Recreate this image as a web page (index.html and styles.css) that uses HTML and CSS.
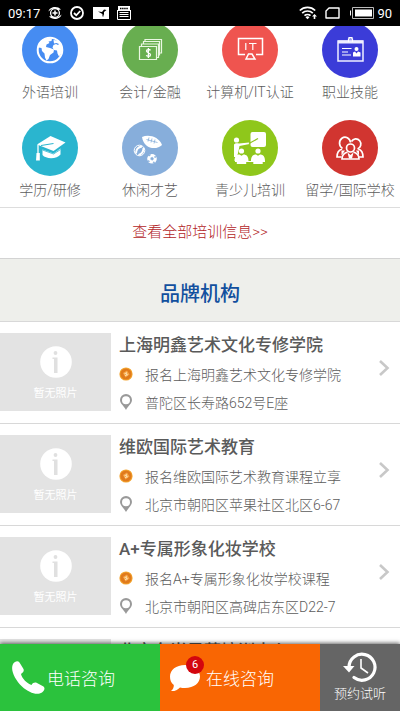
FILE: index.html
```html
<!DOCTYPE html>
<html lang="zh-CN">
<head>
<meta charset="utf-8">
<meta name="viewport" content="width=device-width, initial-scale=1">
<title>培训信息</title>
<link rel="stylesheet" href="styles.css">
</head>
<body>
<svg class="defs" aria-hidden="true">
  <symbol id="coupon" viewBox="0 0 14 14">
    <circle cx="7" cy="7" r="6.6" fill="#f3a42e"/>
    <circle cx="7" cy="7" r="5.6" fill="#e07a1c"/>
    <path d="M4 6l4-2.500 2.500 4-4 3z" fill="#f6a94a"/>
    <path d="M5.500 6.800 8 5.500M7 6l1.200 2.500M6 8.800 8.500 7.500" stroke="#fff0d5" stroke-width=".7" fill="none"/>
  </symbol>
  <symbol id="pin" viewBox="0 0 14 18">
    <path fill-rule="evenodd" d="M7 1a6 6 0 0 0-6 6c0 3.500 4 6 6 10 2-4 6-6.500 6-10a6 6 0 0 0-6-6zm0 2.200a4 4 0 1 1 0 8 4 4 0 0 1 0-8z" fill="#999"/>
  </symbol>
  <symbol id="info" viewBox="0 0 32 32">
    <circle cx="16" cy="16" r="15.800" fill="#fff"/>
    <circle cx="15.500" cy="7" r="1.900" fill="#e0e0e0"/>
    <path d="M12.500 11.500h5V27H14V13h-1.500z" fill="#e0e0e0"/>
  </symbol>
  <symbol id="arrow" viewBox="0 0 12 18">
    <path d="M2 2l7.500 7L2 16" fill="none" stroke="#c8c8c8" stroke-width="2.600"/>
  </symbol>
</svg>
<div class="app">
  <header class="status">
    <time>09:17</time>
    <svg class="s-sync" width="14" height="14" viewBox="0 0 14 14"><path d="M.5 5.500C1.500.5 9.500-.5 13 3.500L10 4C7 1.500 3.500 2.500.5 5.500zM13.500 8.500c-1 5-9 6-12.500 2L4 10c3 2.500 6.500 1.500 9.500-1.500z" fill="#fff"/><circle cx="7" cy="7" r="4.400" fill="none" stroke="#fff" stroke-width="1.300"/><path d="M4.500 7h5M7 4.500v5" stroke="#fff" stroke-width="1.500"/></svg>
    <svg class="s-check" width="14" height="14" viewBox="0 0 14 14"><circle cx="7" cy="7" r="6" fill="none" stroke="#fff" stroke-width="1.800"/><path d="M4 7l2.300 2.300L10.200 5" fill="none" stroke="#fff" stroke-width="1.800"/></svg>
    <svg class="s-photo" width="16" height="12" viewBox="0 0 16 12"><path fill="#fff" d="M0 0h16v12H0z"/><path d="M1.500 2.500 5 4.500l4 .5 2-2.500 2.500.5-2.500 2v3L8.500 6.500z" fill="#000"/><path d="M10 7v2.500" stroke="#000"/></svg>
    <svg class="s-news" width="14" height="14" viewBox="0 0 14 14"><path fill="#fff" d="M1 0h12v5H1z"/><path d="M3 2.500h8" stroke="#000" stroke-width="1.500" stroke-dasharray="1.500 .6"/><path d="M.5 4v9.500h13V4M2.500 6.500h9M2.500 8.500h9M2.500 10.500h9" fill="none" stroke="#fff"/></svg>
    <span class="spacer"></span>
    <svg class="s-wifi" width="19" height="14" viewBox="0 0 19 14"><g fill="none" stroke="#fff" stroke-width="1.700"><path d="M.8 4.500a11 11 0 0 1 15.400 0M3.200 7.200a7.500 7.500 0 0 1 10.600 0M5.500 9.700a4.300 4.300 0 0 1 6 0"/></g><path d="M6.500 11.200a3 3 0 0 1 4 0l-2 2z" fill="#fff"/><path d="M15.500 8 13 10.500h1.700V13h1.600v-2.500H18z" fill="#fff"/></svg>
    <svg class="s-sim" width="15" height="12" viewBox="0 0 15 12"><path d="M4 1h10v10H1V4z" fill="none" stroke="#fff" stroke-width="1.400" stroke-linejoin="round"/></svg>
    <svg class="s-batt" width="24" height="12" viewBox="0 0 24 12"><path d="M2.500.5h21v11h-21z" fill="none" stroke="#bbb"/><path d="M5 2.500h17v7H5zM0 3.500h1v5H0z" fill="#fff"/></svg>
    <span>90</span>
  </header>

  <main>
    <nav class="cats">
      <a href="#"><span class="disc blue"><svg viewBox="0 0 56 56"><circle cx="28" cy="28" r="12.300" fill="none" stroke="#fff" stroke-width="2"/><path d="M16.500 23C18 18.500 22 16 27 16l3 .8-.5 2.200-3 .5 1 1.500-3 1.500-.5 2.500 4 1 4 1.500-.5 3-3.500 2.500-1.500 4-2 1.500-1.500-3-.5-4-2.500-2.500-.5-3-3-.5z" fill="#fff"/><path d="M31.500 18l3.500.5c4 2.500 5.500 6 5 10.500-.5 2-1.500 4-3 5.500l-1.500-3-.5-3-3-.5-1.500-2.500 1-2.500 2.500-1 2 1 1-1-2.500-1-2.500.5z" fill="#fff"/></svg></span>外语培训</a>
      <a href="#"><span class="disc green"><svg viewBox="0 0 56 56"><g fill="none" stroke="#eaf7e2" stroke-width="1.200"><path d="M17.500 24.500h17v13h-17zM19.500 24v-2h17v13.500h-2M21.500 21.500v-2h16V33h-1.500M23 19.500V17.500h16.500V31H38"/></g><path d="M28.500 28.300c-.7-1-4-1.300-4 .7s4 1.500 4 3.700-3.500 2-4.200.6M26.400 26v10" fill="none" stroke="#fff" stroke-width="1.300"/></svg></span>会计/金融</a>
      <a href="#"><span class="disc coral"><svg viewBox="0 0 56 56"><path d="M23 32.500h-6.500V16.500h24v16H34M24 37l2.500-5h3.500l3 5z" fill="none" stroke="#fff" stroke-width="1.500"/><path d="M23.800 21v7M27 21.500h7.500M30.800 21.500V28" fill="none" stroke="#fff" stroke-width="1.200"/></svg></span>计算机/IT认证</a>
      <a href="#"><span class="disc indigo"><svg viewBox="0 0 56 56"><path d="M16 19h25v20H16z" fill="none" stroke="#eef" stroke-width="1.500"/><path d="M16 18.500h25v3H16z" fill="#eef"/><path d="M26.500 20v-3h4v3M27 17v-1.500h3V17" fill="none" stroke="#fff" stroke-width="1.200"/><path d="M20 26.500h9.500M20 30h6M20 33h9" stroke="#fff" stroke-width="1.200"/><circle cx="34.500" cy="27" r="2" fill="#fff"/><path d="M31 34.500v-4l2-1 1.500 2 1.500-2 2.500 1v4z" fill="#fff"/></svg></span>职业技能</a>
      <a href="#"><span class="disc cyan"><svg viewBox="0 0 56 56"><path d="M15 24.500 28.500 16 43.500 22.500 31.500 31z" fill="#fff"/><path d="M20.500 29.500l11 4 7-5v6c-3 4.500-14.500 5-18 .5z" fill="#fff"/><path d="M31.500 23.500 19 25.500" stroke="#2ab5cf" stroke-width="1"/><path d="M20.500 30l11 4 7-4.500" fill="none" stroke="#2ab5cf" stroke-width=".8"/><path d="M16 25v9" stroke="#fff" stroke-width="1.300"/><path d="M14.500 33h3.300v7.500h-3.800z" fill="#fff"/></svg></span>学历/研修</a>
      <a href="#"><span class="disc sky"><svg viewBox="0 0 56 56"><path d="M20 17c7-3 17 0 20 8-5 5-18 5-20-8z" fill="#fff"/><path d="M24.500 19.500l11 3M27 17.500l-1 4M30 18.500l-1 4M33 19.500l-1 4" stroke="#87aedb" stroke-width=".8"/><circle cx="17.500" cy="30.500" r="5.300" fill="none" stroke="#fff" stroke-width="1"/><path d="M14 33.500c0-4 2.500-6.500 6-7M16.500 35c3.500-1 5-3.500 5-7" fill="none" stroke="#fff" stroke-width="2"/><circle cx="30" cy="38.800" r="4.800" fill="#fff"/><path d="M28.800 37.800l1.800-.6 1 1.600-1 1.400-1.800-.6zM26 35.500l1.800.5.7-1.500zM34.200 36.500l-1.700 0 .5 1.500zM33 42.500l-1.500-.8-.5 1.500zM25.500 41l1.500-.5.5 1.500z" fill="#87aedb" stroke="#87aedb" stroke-width=".5"/></svg></span>休闲才艺</a>
      <a href="#"><span class="disc lime"><svg viewBox="0 0 56 56"><rect x="28.500" y="12" width="15.500" height="15" rx="2" fill="#fff"/><circle cx="14.500" cy="20" r="2.600" fill="#fff"/><path d="M12 24.500c1-1.500 3-1.500 5-1l10-1 .5 1.500-10 2-1 5-1.500 6h-3z" fill="#fff"/><path d="M27 23.500l9-5" stroke="#8ec31f" stroke-width="1.200"/><circle cx="19.500" cy="31" r="2.600" fill="#fff"/><circle cx="36" cy="31" r="2.600" fill="#fff"/><path d="M12.500 41c0-4.500 2-6.500 5-6.500l2 1.200 2-1.200c3 0 5 2 5 6.500h-2.300v3h-9.400v-3zM29 41c0-4.500 2-6.500 5-6.500l2 1.200 2-1.200c3 0 5 2 5 6.500h-2.300v3h-9.400v-3z" fill="#fff"/><path d="M13 41.500h30" stroke="#fff"/></svg></span>青少儿培训</a>
      <a href="#"><span class="disc red"><svg viewBox="0 0 56 56"><g fill="none" stroke="#fff" stroke-width="1.700"><path d="M20.500 28.500a5.500 6 0 1 1 8-6M29.500 21.500a5 5.200 0 1 1 6 7.500M20 29c-3.500 1-5 4-5 8h4.500M36.500 29c3 1 4.500 4 4.500 8h-4.500"/><circle cx="28.500" cy="28" r="4"/><path d="M25.500 32c-3.500 1-5.500 3.500-5.500 7h17c0-3.500-2-6-5.500-7"/></g><path d="M25.500 32.500l3 2.500 3-2.500-1.500 6h-3zM19.500 30.500l3.500 0-3.500 5zM37 30.500l-3 0 3 5z" fill="#fff"/></svg></span>留学/国际学校</a>
    </nav>
    <a class="all" href="#">查看全部培训信息&gt;&gt;</a>
    <h2>品牌机构</h2>
    <ul class="list">
      <li><a href="#">
        <span class="thumb"><svg viewBox="0 0 32 32"><use href="#info"/></svg>暂无照片</span>
        <span class="text"><strong>上海明鑫艺术文化专修学院</strong>
          <span class="row"><svg class="coupon"><use href="#coupon"/></svg>报名上海明鑫艺术文化专修学院</span>
          <span class="row"><svg class="pin"><use href="#pin"/></svg>普陀区长寿路652号E座</span></span>
        <svg class="arrow"><use href="#arrow"/></svg></a></li>
      <li><a href="#">
        <span class="thumb"><svg viewBox="0 0 32 32"><use href="#info"/></svg>暂无照片</span>
        <span class="text"><strong>维欧国际艺术教育</strong>
          <span class="row"><svg class="coupon"><use href="#coupon"/></svg>报名维欧国际艺术教育课程立享</span>
          <span class="row"><svg class="pin"><use href="#pin"/></svg>北京市朝阳区苹果社区北区6-67</span></span>
        <svg class="arrow"><use href="#arrow"/></svg></a></li>
      <li><a href="#">
        <span class="thumb"><svg viewBox="0 0 32 32"><use href="#info"/></svg>暂无照片</span>
        <span class="text"><strong>A+专属形象化妆学校</strong>
          <span class="row"><svg class="coupon"><use href="#coupon"/></svg>报名A+专属形象化妆学校课程</span>
          <span class="row"><svg class="pin"><use href="#pin"/></svg>北京市朝阳区高碑店东区D22-7</span></span>
        <svg class="arrow"><use href="#arrow"/></svg></a></li>
      <li><a href="#">
        <span class="thumb"></span>
        <span class="text"><strong>北京东尚风范培训中心</strong></span></a></li>
    </ul>
  </main>

  <footer class="bar">
    <a class="call" href="#"><svg width="34" height="34" viewBox="0 0 34 34"><path d="M2 3C4 0 7-.5 8.500 1.500l4 6.500c.8 2-.3 3.500-2.500 5 1 4.500 6 9.500 10.500 11 1.500-2.500 3.500-3 5.500-2l6.500 3.500c1.800 1.500 1 4-1.500 6-5 3-13 .5-20-6S-1 9 2 3z" fill="#fff"/></svg>电话咨询</a>
    <a class="chat" href="#"><span class="bubble"><svg width="34" height="30" viewBox="0 0 34 30"><path d="M17 2c9 0 15 5 15 11.500S26 25 17 25c-2 0-3.500-.2-5-.6C9.500 27 6 28.500 3 28c2-1.500 3-4 2.800-6C3 20 2 17 2 13.500 2 7 8 2 17 2z" fill="#fff"/></svg><b>6</b></span>在线咨询</a>
    <a class="book" href="#"><svg width="34" height="30" viewBox="0 0 34 30"><path d="M6 15A13 13 0 1 1 11 25.500" fill="none" stroke="#fff" stroke-width="3.200" stroke-linecap="round"/><path d="M0 14h11.500L6 20.500z" fill="#fff"/><path d="M18 7v9l7 5" fill="none" stroke="#fff" stroke-width="1.600"/></svg>预约试听</a>
  </footer>
</div>
</body>
</html>
```
FILE: styles.css
```css
* { box-sizing: border-box; }
body {
  margin: 0;
  background: #fff;
  color: #5c5c5c;
  font-family: Roboto, "Noto Sans CJK SC", sans-serif;
  font-size: 14px;
  font-weight: 300;
}
a { color: inherit; text-decoration: none; }
svg { display: block; flex: none; }
.defs { position: absolute; width: 0; height: 0; }

.app { display: flex; flex-direction: column; height: 100vh; }

.status {
  display: flex;
  align-items: center;
  position: relative;
  z-index: 1;
  flex: none;
  height: 26px;
  padding: 0 8px;
  background: #000;
  color: #fff;
  font-size: 13px;
  font-weight: 400;
}
.spacer { flex: 1; }
.s-sync { margin-left: 8px; }
.s-check { margin-left: 8px; }
.s-photo { margin-left: 9px; }
.s-news { margin-left: 8px; }
.s-sim { margin-left: 7px; }
.s-batt { margin: 0 3px 0 10px; }

main { flex: 1; min-height: 0; overflow: hidden; }

.cats {
  display: grid;
  grid-template-columns: repeat(4, 1fr);
  row-gap: 18px;
  margin-top: -4px;
  padding-bottom: 7px;
  border-bottom: 1px solid #ddd;
}
.cats a {
  display: flex;
  flex-direction: column;
  align-items: center;
  gap: 4px;
  line-height: 20px;
  white-space: nowrap;
}
.disc { width: 56px; height: 56px; border-radius: 50%; }
.blue { background: #468cf2; }
.green { background: #68ae50; }
.coral { background: #ef544f; }
.indigo { background: #3b3cd8; }
.cyan { background: #2ab5cf; }
.sky { background: #87aedb; }
.lime { background: #8fc71b; }
.red { background: #d13530; }

.all {
  display: block;
  height: 51px;
  border-bottom: 1px solid #d3d3d3;
  color: #b3241f;
  font-size: 15px;
  line-height: 48px;
  text-align: center;
}
h2 {
  margin: 0;
  padding: 8px 0 0;
  background: #eeefeb;
  color: #12509e;
  font-size: 20px;
  font-weight: 500;
  line-height: 54px;
  text-align: center;
}

.list { margin: 0; padding: 0; list-style: none; }
.list li { border-top: 1px solid #d8d8d8; }
.list a { display: flex; padding: 11px 10px 7px 0; }
.thumb {
  display: flex;
  flex-direction: column;
  align-items: center;
  flex: none;
  gap: 7px;
  width: 111px;
  height: 78px;
  padding-top: 13px;
  background: #e3e3e3;
  color: #fff;
  font-size: 11px;
  font-weight: 400;
  line-height: 18px;
}
.thumb svg { width: 32px; height: 32px; }
.text { flex: 1; min-width: 0; padding-left: 8px; }
.text strong {
  display: block;
  margin-bottom: 3px;
  color: #5a5a5a;
  font-size: 17px;
  font-weight: 500;
  line-height: 24px;
}
.row { display: flex; align-items: center; height: 28px; white-space: nowrap; }
.coupon { width: 14px; height: 14px; margin-right: 12px; }
.pin { width: 14px; height: 18px; margin-right: 12px; }
.arrow { width: 12px; height: 18px; margin-top: 26px; }

.bar {
  display: grid;
  grid-template-columns: 2fr 2fr 1fr;
  position: relative;
  flex: none;
  height: 67px;
  color: #fff;
  font-size: 17px;
  box-shadow: 0 -1px 4px rgba(0, 0, 0, .6);
}
.bar a { display: flex; align-items: center; white-space: nowrap; }
.call { gap: 2px; padding: 0 0 0 11px; background: #2bc23d; }
.chat { gap: 4px; padding-left: 8px; background: #f96603; }
.bubble { position: relative; }
.bubble b {
  position: absolute;
  top: -7px;
  right: -2px;
  width: 18px;
  height: 18px;
  border-radius: 50%;
  background: #d3060e;
  font-size: 11px;
  font-weight: 400;
  line-height: 17px;
  text-align: center;
}
.bar .book {
  flex-direction: column;
  justify-content: center;
  gap: 2px;
  background: #656565;
  font-size: 13px;
  line-height: 20px;
}
```
